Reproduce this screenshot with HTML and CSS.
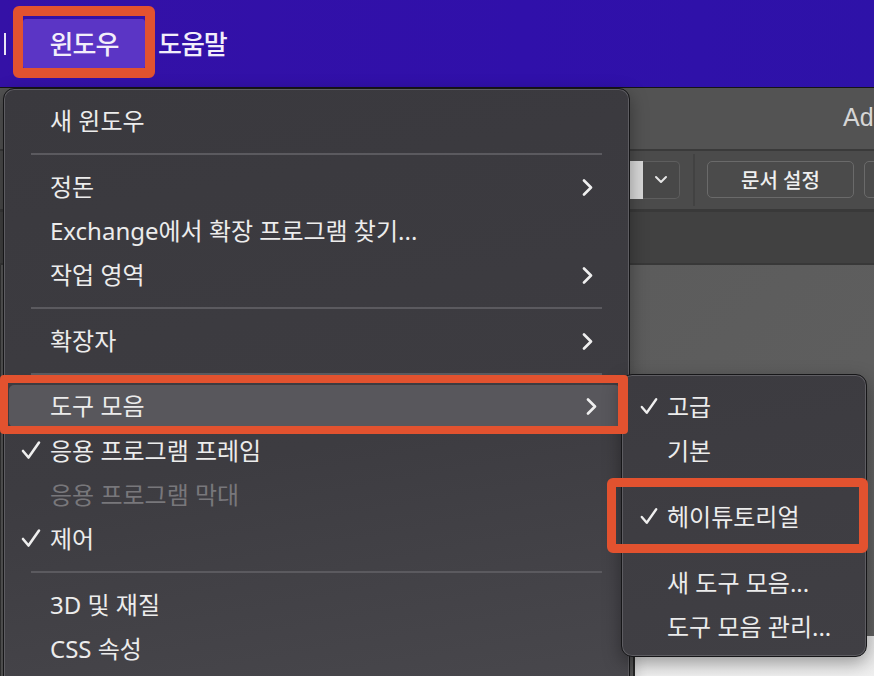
FILE: index.html
```html
<!DOCTYPE html>
<html lang="ko">
<head>
    <meta charset="UTF-8">
    <meta name="viewport" content="width=device-width, initial-scale=1.0">
    <title>윈도우 메뉴</title>
    <link rel="stylesheet" href="styles.css">
</head>
<body>
    <div class="menubar">
        <span class="menubar-tail"></span>
        <div class="menubar-item active">윈도우</div>
        <div class="menubar-item">도움말</div>
    </div>

    <div class="app">
        <div class="app-title">Ad</div>
        <div class="app-toolbar">
            <div class="combo">
                <div class="combo-input"></div>
                <div class="combo-btn">
                    <svg width="14" height="9" viewBox="0 0 14 9"><polyline points="2,2 7,7 12,2" fill="none" stroke="#e6e6e6" stroke-width="2" stroke-linecap="round" stroke-linejoin="round"/></svg>
                </div>
            </div>
            <div class="tool-sep"></div>
            <div class="tool-btn">문서 설정</div>
            <div class="tool-btn"></div>
        </div>
        <div class="app-tabs"></div>
        <div class="app-canvas">
            <div class="doc"></div>
        </div>
    </div>

    <!-- 윈도우 메뉴 -->
    <div class="menu main-menu">
        <div class="item">새 윈도우</div>
        <div class="sep"></div>
        <div class="item sub">정돈</div>
        <div class="item">Exchange에서 확장 프로그램 찾기...</div>
        <div class="item sub">작업 영역</div>
        <div class="sep"></div>
        <div class="item sub">확장자</div>
        <div class="sep"></div>
        <div class="item sub hover">도구 모음</div>
        <div class="item checked">응용 프로그램 프레임</div>
        <div class="item disabled">응용 프로그램 막대</div>
        <div class="item checked">제어</div>
        <div class="sep"></div>
        <div class="item">3D 및 재질</div>
        <div class="item">CSS 속성</div>
    </div>

    <!-- 도구 모음 하위 메뉴 -->
    <div class="menu sub-menu">
        <div class="item checked">고급</div>
        <div class="item">기본</div>
        <div class="sep"></div>
        <div class="item checked">헤이튜토리얼</div>
        <div class="sep"></div>
        <div class="item">새 도구 모음...</div>
        <div class="item">도구 모음 관리...</div>
    </div>

    <div class="mark mark-bar"></div>
    <div class="mark mark-tools"></div>
    <div class="mark mark-sub"></div>
</body>
</html>
```

FILE: styles.css
```css
* {box-sizing:border-box;}
html, body {margin:0; padding:0; width:874px; height:676px; overflow:hidden;}
body {font-family:"Noto Sans", "Noto Sans CJK KR", sans-serif; background:#3a3a3a; position:relative; color:#ececec;}

.menubar {height:88px; display:flex; align-items:center; background:linear-gradient(90deg, #3411a6, #3010aa 60%, #2e12a8); border-bottom:1px solid #151515;}
.menubar-tail {width:2px; height:22px; background:#e8e4f4; margin-left:4px; margin-right:17px;}
.menubar-item {font-size:26px; font-weight:500; color:#f2eefa; letter-spacing:-1px; margin-right:13px; padding-bottom:2px;}
.menubar-item.active {background:#5b35c5; width:122px; height:50px; border-radius:3px; display:flex; align-items:center; justify-content:center;}

.app {display:flex; flex-direction:column; height:588px;}
.app-title {height:68px; background:#535353; border-bottom:2px solid #3a3a3a; color:#d6d6d6; font-size:25px; white-space:nowrap; overflow:hidden; padding-left:843px; padding-top:15px; font-family:"Liberation Sans", sans-serif;}
.app-toolbar {height:68px; background:#4b4b4b; border-bottom:3px solid #393939; display:flex; align-items:center; white-space:nowrap; overflow:hidden; padding-left:560px;}
.combo {display:flex; height:38px; flex-shrink:0;}
.combo-input {width:83px; background:#d8d8d8;}
.combo-btn {width:37px; border:1.5px solid #5e5e5e; border-left:none; border-radius:0 5px 5px 0; display:flex; align-items:center; justify-content:center; background:#484848;}
.tool-sep {width:2px; height:52px; background:#424242; margin:0 12px 0 13px; flex-shrink:0;}
.tool-btn {flex-shrink:0; width:147px; height:37px; border:1.5px solid #6a6a6a; border-radius:5px; display:flex; align-items:center; justify-content:center; font-size:20px; font-weight:500; color:#efefef; margin-right:10px;}
.app-tabs {height:59px; background:#414141; border-bottom:2px solid #383838;}
.app-canvas {flex:1; background:linear-gradient(135deg, #585858, #606060); padding-top:371px; padding-left:632px; border-left:1px solid #333;}
.doc {height:40px; background:linear-gradient(180deg, #e4e4e4, #f0f0f0); border-left:2px solid #2a2a2a;}

.menu {position:absolute; border:1px solid #161618; border-radius:11px; box-shadow:inset 0 0 0 1px #5e5d62, 0 6px 18px rgba(0,0,0,0.35); font-size:24px; color:#ececec;}
.main-menu {left:3px; top:88px; width:627px; height:640px; padding-top:10px; background:linear-gradient(170deg, #3a393e, #3d3c41 55%, #4a494e);}
.sub-menu {left:621px; top:374px; width:246px; height:283px; padding-top:10px; background:linear-gradient(170deg, #3c3b40, #403f44);}

.item {height:44px; display:flex; align-items:center; padding-left:46px; padding-bottom:3px; position:relative; white-space:nowrap;}
.sub-menu .item {padding-left:45px;}
.item.disabled {color:#78777b;}
.item.hover {background:#58575c; margin:0 9px 0 5px; padding-left:41px; border-radius:5px; height:42px; margin-bottom:2px;}
.item.checked::before {content:""; position:absolute; left:17px; top:11px; width:20px; height:20px; background:url("data:image/svg+xml,%3Csvg xmlns='http://www.w3.org/2000/svg' viewBox='0 0 20 20'%3E%3Cpolyline points='2,11 7.5,17.5 18,2.5' fill='none' stroke='%23efefef' stroke-width='2.6' stroke-linecap='round' stroke-linejoin='round'/%3E%3C/svg%3E") no-repeat center/contain;}
.sub-menu .item.checked::before {left:18px; width:18px; height:18px; top:12px;}
.item.sub::after {content:""; position:absolute; right:36px; top:14px; width:11px; height:17px; background:url("data:image/svg+xml,%3Csvg xmlns='http://www.w3.org/2000/svg' viewBox='0 0 11 17'%3E%3Cpolyline points='2,1.5 9,8.5 2,15.5' fill='none' stroke='%23efefef' stroke-width='2.6' stroke-linecap='round' stroke-linejoin='round'/%3E%3C/svg%3E") no-repeat center/contain;}
.item.hover::after {right:23px; top:13px;}
.sep {height:22px; display:flex; align-items:center; padding:0 27px;}
.sep::before {content:""; flex:1; height:2px; background:#5b5a5f;}

.mark {position:absolute; border:10px solid #e2522f; border-radius:6px;}
.mark-bar {left:13px; top:6px; width:142px; height:72px;}
.mark-tools {left:0; top:375px; width:628px; height:59px; border-width:8px 10px 8px 8px; border-radius:4px;}
.mark-sub {left:607px; top:478px; width:261px; height:75px; border-width:9px;}
```
